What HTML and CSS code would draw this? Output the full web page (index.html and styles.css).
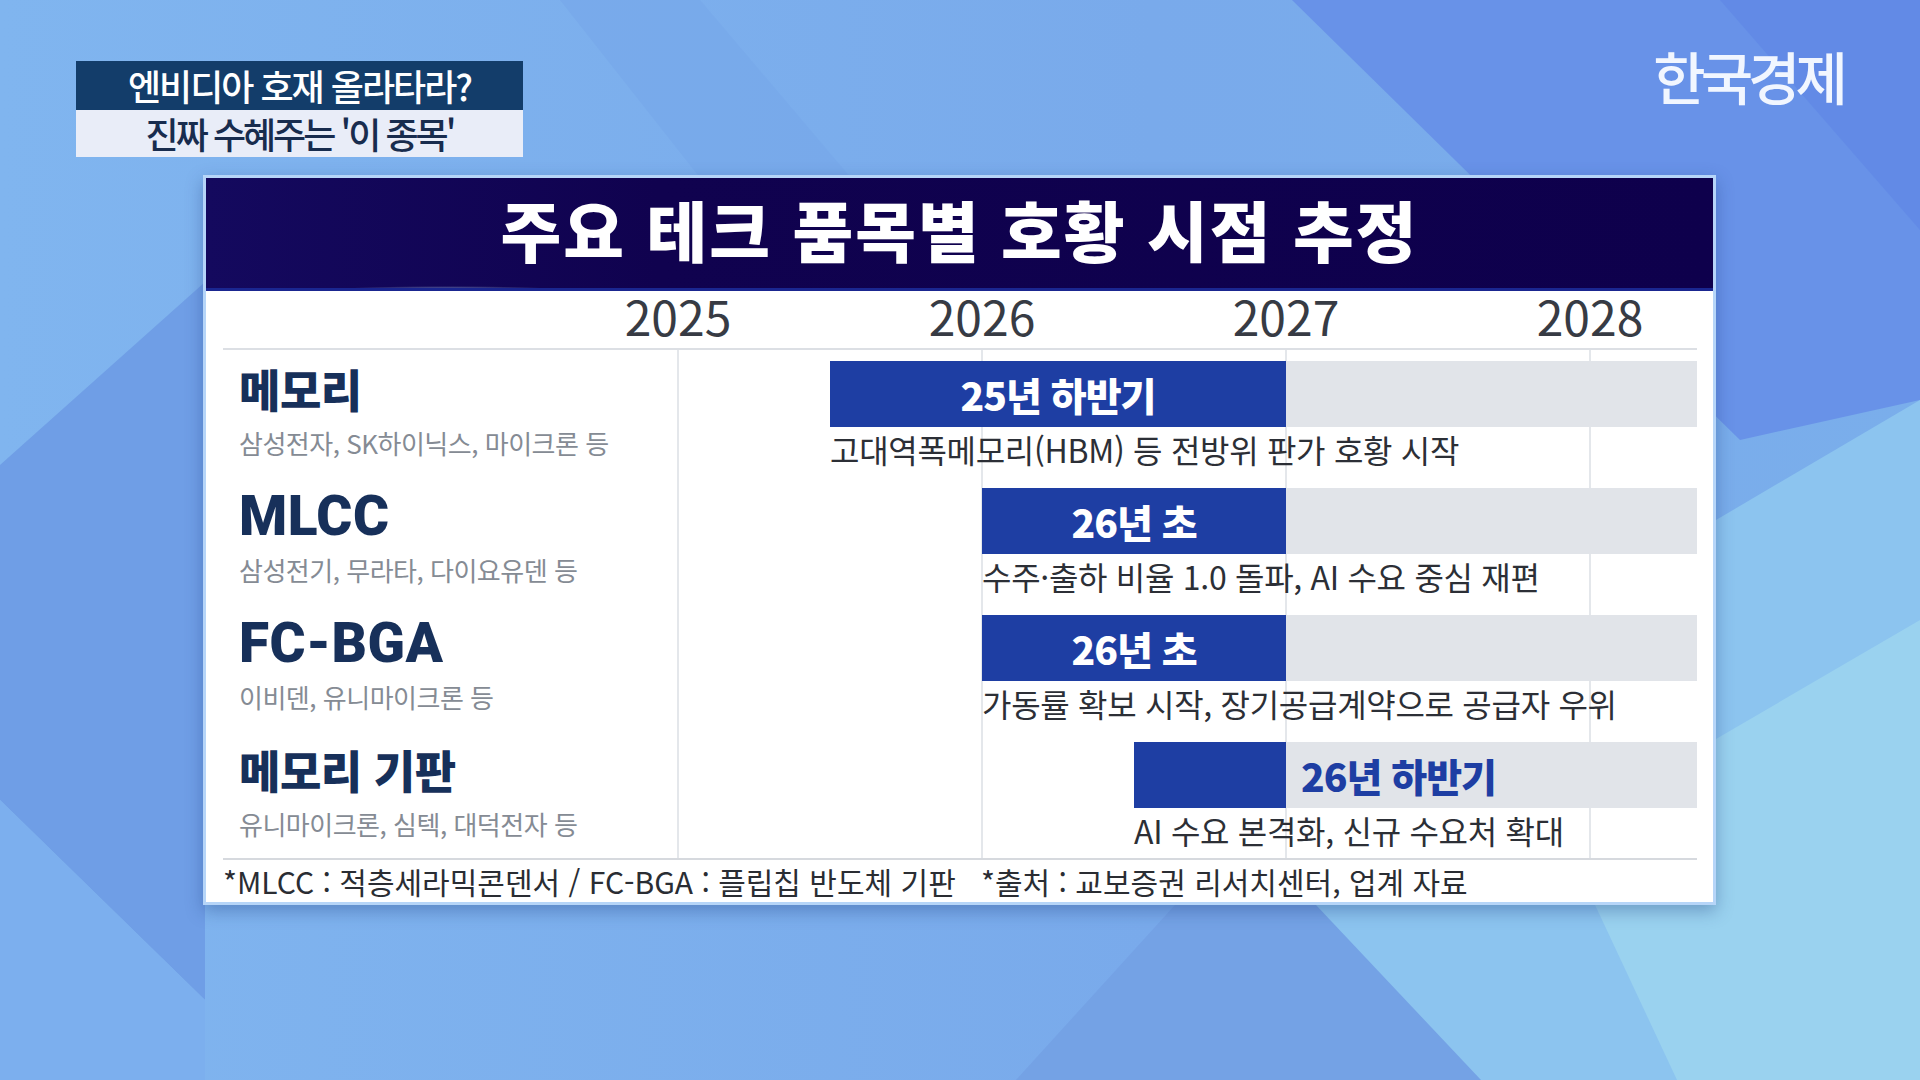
FILE: index.html
```html
<!DOCTYPE html>
<html lang="ko">
<head>
<meta charset="utf-8">
<title>주요 테크 품목별 호황 시점 추정</title>
<link rel="stylesheet" href="styles.css">
</head>
<body>
<div class="page">
  <svg class="bg" viewBox="0 0 1920 1080" preserveAspectRatio="none" aria-hidden="true">
    <defs>
      <linearGradient id="base" x1="0" y1="0" x2="1" y2="0">
        <stop offset="0" stop-color="#80b5ef"/>
        <stop offset="0.6" stop-color="#79aaeb"/>
        <stop offset="1" stop-color="#7aaeeb"/>
      </linearGradient>
    </defs>
    <rect width="1920" height="1080" fill="url(#base)"/>
    <polygon points="560,0 700,0 980,330 820,330" fill="#76a6ea" opacity="0.6"/>
    <polygon points="1292,0 1920,0 1920,400 1740,440" fill="#6892e8"/>
    <polygon points="1720,0 1920,0 1920,230" fill="#5f88e6" opacity="0.7"/>
    <polygon points="1716,520 1920,400 1920,1080 1480,1080 1250,840" fill="#8cc4ef"/>
    <polygon points="1560,830 1920,620 1920,1080 1677,1080" fill="#9ad2ef"/>
    <polygon points="1175,905 1316,905 1481,1080 1016,1080" fill="#74a2e5"/>
    <polygon points="0,465 205,282 205,1000 0,800" fill="#6f9ee6"/>
    <polygon points="0,800 205,1000 205,1080 0,1080" fill="#7cafee"/>
  </svg>

  <div class="layer">
    <header class="topbar">
      <div class="caption">
        <div class="cap1">엔비디아 호재 올라타라?</div>
        <div class="cap2">진짜 수혜주는 '이 종목'</div>
      </div>
      <div class="logo">한국경제</div>
    </header>

    <section class="card">
      <h1 class="card-title">주요 테크 품목별 호황 시점 추정</h1>
      <div class="body">
        <div class="years">
          <span class="year">2025</span>
          <span class="year">2026</span>
          <span class="year">2027</span>
          <span class="year">2028</span>
        </div>

        <div class="rows">
          <div class="row">
            <div class="label">
              <div class="name">메모리</div>
              <div class="sub">삼성전자, SK하이닉스, 마이크론 등</div>
            </div>
            <div class="timeline">
              <div class="track" style="margin-left:152px">
                <div class="seg-on"><span class="bar-text">25년 하반기</span></div>
                <div class="seg-off"></div>
              </div>
              <div class="desc" style="margin-left:152px">고대역폭메모리(HBM) 등 전방위 판가 호황 시작</div>
            </div>
          </div>

          <div class="row">
            <div class="label">
              <div class="name"><span class="lat">MLCC</span></div>
              <div class="sub">삼성전기, 무라타, 다이요유덴 등</div>
            </div>
            <div class="timeline">
              <div class="track" style="margin-left:304px">
                <div class="seg-on"><span class="bar-text">26년 초</span></div>
                <div class="seg-off"></div>
              </div>
              <div class="desc" style="margin-left:304px">수주·출하 비율 1.0 돌파, AI 수요 중심 재편</div>
            </div>
          </div>

          <div class="row">
            <div class="label">
              <div class="name"><span class="lat">FC-BGA</span></div>
              <div class="sub">이비덴, 유니마이크론 등</div>
            </div>
            <div class="timeline">
              <div class="track" style="margin-left:304px">
                <div class="seg-on"><span class="bar-text">26년 초</span></div>
                <div class="seg-off"></div>
              </div>
              <div class="desc" style="margin-left:304px">가동률 확보 시작, 장기공급계약으로 공급자 우위</div>
            </div>
          </div>

          <div class="row">
            <div class="label">
              <div class="name">메모리 기판</div>
              <div class="sub">유니마이크론, 심텍, 대덕전자 등</div>
            </div>
            <div class="timeline">
              <div class="track" style="margin-left:456px">
                <div class="seg-on"></div>
                <div class="seg-off"><span class="bar-text outside">26년 하반기</span></div>
              </div>
              <div class="desc" style="margin-left:456px">AI 수요 본격화, 신규 수요처 확대</div>
            </div>
          </div>
        </div>

        <div class="footnote">*MLCC : 적층세라믹콘덴서 / FC-BGA : 플립칩 반도체 기판&nbsp;&nbsp;&nbsp;*출처 : 교보증권 리서치센터, 업계 자료</div>
      </div>
    </section>
  </div>
</div>
</body>
</html>
```

FILE: styles.css
```css
html, body {
  margin: 0;
  padding: 0;
}

body {
  font-family: "Noto Sans CJK KR", "Noto Sans", sans-serif;
  background: #7aaeeb;
}

.page {
  position: relative;
  width: 1920px;
  height: 1080px;
  overflow: hidden;
}

.bg {
  position: absolute;
  left: 0;
  top: 0;
  width: 1920px;
  height: 1080px;
}

.layer {
  position: relative;
}

/* ---------- top bar ---------- */
.topbar {
  display: flex;
  justify-content: space-between;
  align-items: flex-start;
  padding: 61px 77px 0 76px;
}

.caption {
  width: 447px;
  text-align: center;
  font-size: 36px;
  font-weight: 500;
}

.cap1 {
  height: 49px;
  line-height: 49px;
  background: #133d6a;
  color: #ffffff;
  letter-spacing: -2px;
}

.cap2 {
  height: 47px;
  line-height: 47px;
  background: #e9edf8;
  color: #182c4e;
  letter-spacing: -3px;
}

.logo {
  margin-top: -19px;
  font-size: 57px;
  line-height: 66px;
  font-weight: 500;
  color: #f1f6ff;
  letter-spacing: -5px;
}

/* ---------- card ---------- */
.card {
  margin: 18px 0 0 203px;
  width: 1513px;
  box-sizing: border-box;
  border: 3px solid #b6d5f8;
  background: #ffffff;
  box-shadow: 0 6px 16px rgba(25, 55, 120, 0.35);
}

.card-title {
  margin: 0;
  height: 113px;
  box-sizing: border-box;
  line-height: 100px;
  text-align: center;
  font-size: 66px;
  font-weight: 900;
  letter-spacing: 2px;
  color: #ffffff;
  background:
    radial-gradient(ellipse 130px 5px at 16% 100%, rgba(170, 205, 255, 0.95), rgba(170, 205, 255, 0)),
    linear-gradient(90deg, #14095e 0%, #10024f 30%, #0e004c 100%);
  box-shadow: inset 0 -3px 0 #1a2690;
}

.body {
  padding: 0 16px 0 17px;
}

.years {
  display: flex;
  height: 57px;
  padding-left: 303px;
  border-bottom: 2px solid #dcdfe4;
}

.year {
  flex: 0 0 304px;
  text-align: center;
  font-size: 48px;
  line-height: 48px;
  color: #373b44;
}

.rows {
  background-image: repeating-linear-gradient(to right, #e4e7eb 0 2px, transparent 2px 304px);
  background-position: 454px 0;
  background-size: 1020px 100%;
  background-repeat: no-repeat;
}

.row {
  display: grid;
  grid-template-columns: 455px 1019px;
  height: 127px;
  padding-top: 11px;
  box-sizing: border-box;
}

.label {
  padding-left: 16px;
}

.name {
  height: 52px;
  margin-top: 2px;
  font-size: 45px;
  line-height: 52px;
  font-weight: 900;
  color: #17305a;
  letter-spacing: -0.5px;
  white-space: nowrap;
}

.lat {
  font-family: "Roboto", "Noto Sans", sans-serif;
  font-size: 55px;
  font-weight: 900;
  letter-spacing: 0.5px;
}

.sub {
  margin-top: 11px;
  font-size: 26px;
  line-height: 34px;
  color: #858b94;
  letter-spacing: -0.5px;
  white-space: nowrap;
}

.timeline {
  display: flex;
  flex-direction: column;
}

.track {
  display: flex;
  height: 66px;
}

.seg-on {
  flex: 1 1 auto;
  display: flex;
  align-items: center;
  justify-content: center;
  background: #1e3ea3;
}

.seg-off {
  flex: 0 0 411px;
  display: flex;
  align-items: center;
  background: #e1e4e9;
}

.bar-text {
  font-size: 39px;
  font-weight: 900;
  color: #ffffff;
  letter-spacing: -1px;
}

.bar-text.outside {
  padding-left: 15px;
  color: #1e3ea3;
}

.desc {
  margin-top: 2px;
  font-size: 32px;
  line-height: 40px;
  color: #2c2f36;
  letter-spacing: -0.3px;
  white-space: nowrap;
}

.footnote {
  border-top: 2px solid #d6d9de;
  height: 42px;
  line-height: 42px;
  font-size: 30px;
  color: #2a2d33;
  letter-spacing: 0;
  white-space: nowrap;
}
```
